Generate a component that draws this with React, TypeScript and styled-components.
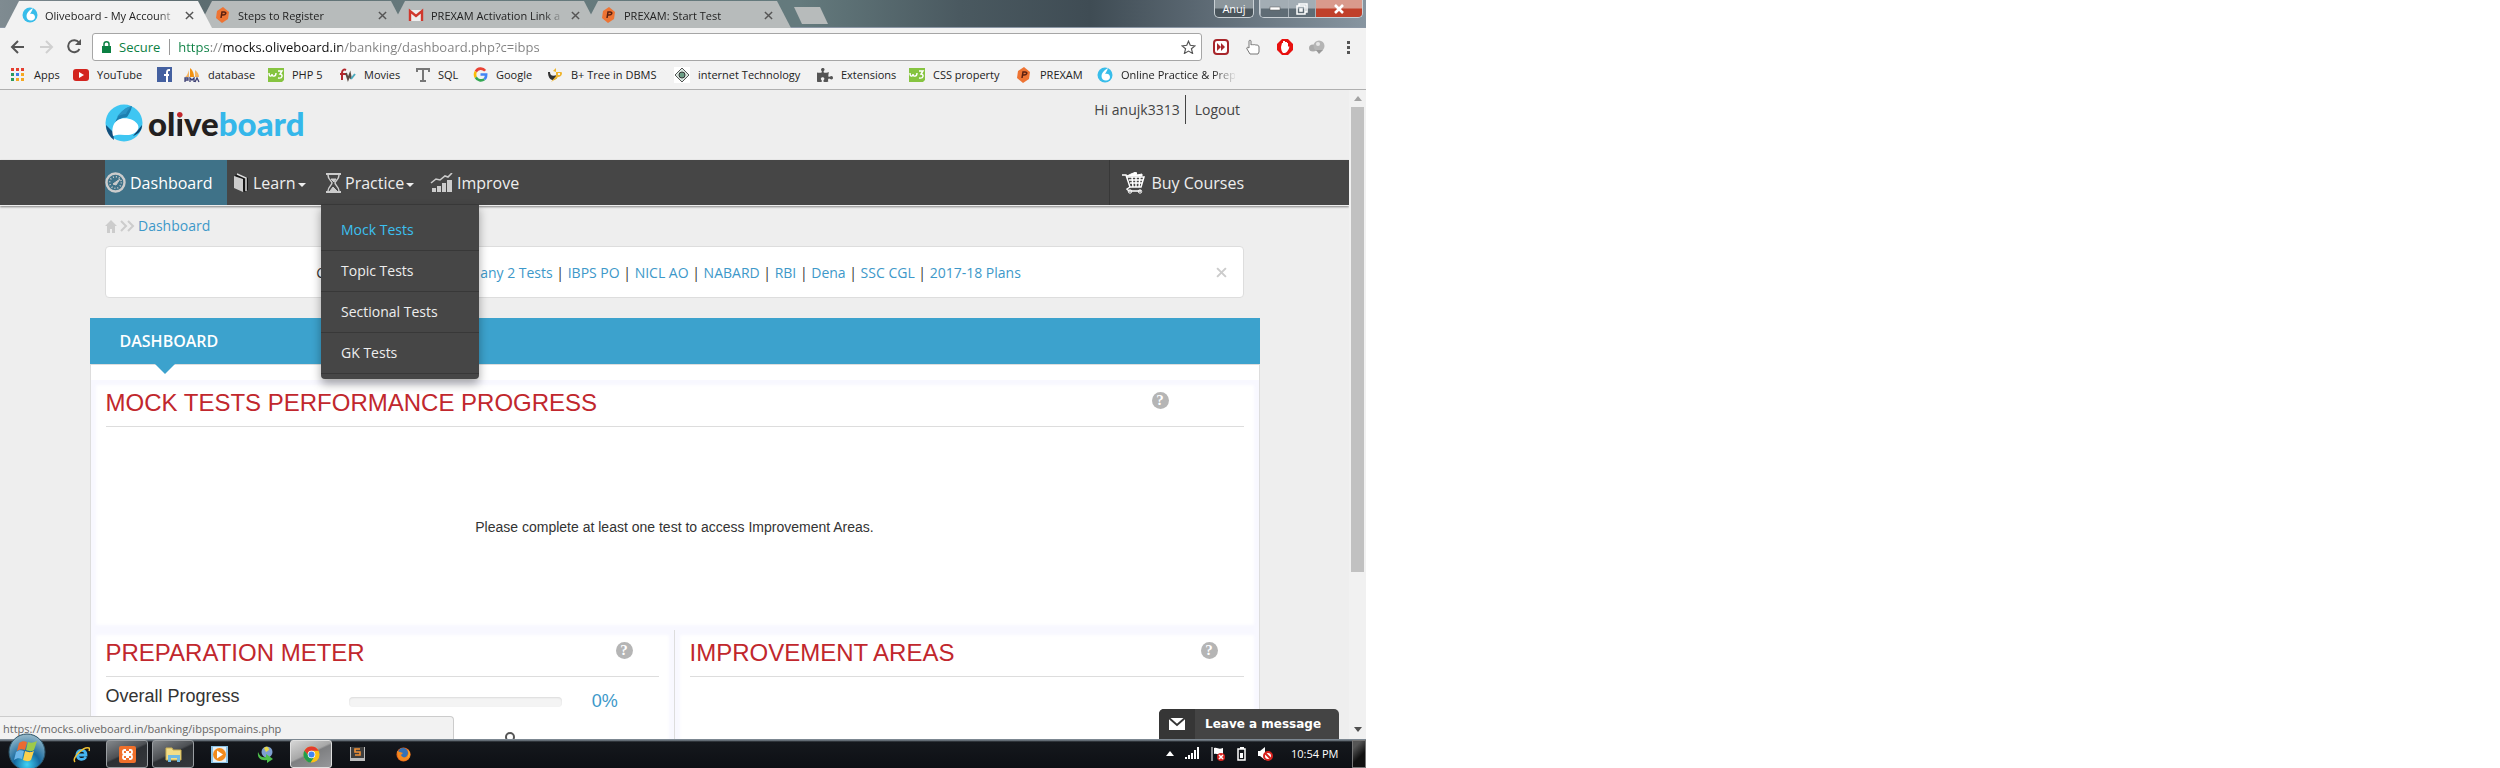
import React from 'react';
import styled, { createGlobalStyle, css } from 'styled-components';
import { FaPuzzlePiece } from 'react-icons/fa';

const GlobalStyle = createGlobalStyle`
  * { box-sizing: border-box; }
  body { margin: 0; background: #fff; font-family: 'Open Sans', 'Noto Sans', sans-serif; }
  button { font: inherit; color: inherit; background: none; border: 0; padding: 0; cursor: pointer; }
  a { text-decoration: none; color: inherit; }
  ul { list-style: none; margin: 0; padding: 0; }
  h1, h2, h3, p { margin: 0; font-weight: 400; }
  svg { display: block; flex: none; }
`;

const Desktop = styled.div`
  display: flex;
  flex-direction: column;
  width: 100%;
  max-width: 1366px;
  height: 100vh;
  overflow: hidden;
`;

/* ---------- browser frame ---------- */

const TitleBar = styled.div`
  display: flex;
  height: 28px;
  flex: none;
  padding-left: 5px;
  background: linear-gradient(90deg, #7f8b91 0, #5c6c70 190px, #66797c 420px, #647a7d 800px, #4a5960 960px, #3f4c54 1090px, #56636d 1180px, #8795a0 1366px);
  border-bottom: 1px solid #8b97a5;
`;

const Tab = styled.div<{ $active?: boolean }>`
  display: flex;
  align-items: center;
  width: 207px;
  height: 28px;
  flex: none;
  margin-right: -14px;
  padding: 2px 18px 0 17px;
  position: relative;
  z-index: ${(p) => (p.$active ? 2 : 1)};
  background: ${(p) => (p.$active ? '#f2f2f2' : '#b7bbbb')};
  clip-path: polygon(14px 1px, 193px 1px, 207px 100%, 0 100%);
  font-size: 11px;
  color: #222;
`;

const TabTitle = styled.button`
  flex: 1;
  margin-left: 7px;
  text-align: left;
  white-space: nowrap;
  overflow: hidden;
  mask-image: linear-gradient(90deg, #000 112px, transparent 134px);
`;

const TabClose = styled.button`
  width: 9px;
  height: 9px;
  margin: 0 0 0 6px;
`;

const NewTab = styled.button`
  width: 34px;
  height: 17px;
  margin: 7px 0 0 17px;
  background: #b7bbbb;
  clip-path: polygon(0 0, 26px 0, 100% 100%, 8px 100%);
`;

const WindowControls = styled.div`
  display: flex;
  gap: 5px;
  margin-left: auto;
  padding-right: 3px;
`;

const controlFrame = css`
  height: 18px;
  border: 1px solid #c9d0d5;
  border-top: 0;
  border-radius: 0 0 5px 5px;
  overflow: hidden;
`;

const UserBadge = styled.button`
  ${controlFrame}
  width: 40px;
  background: linear-gradient(#8c969c 45%, #4a555c 55%);
  color: #fff;
  font-size: 11px;
  line-height: 16px;
`;

const ControlGroup = styled.div`
  ${controlFrame}
  display: flex;
`;

const WinButton = styled.button<{ $w: number; $danger?: boolean }>`
  display: grid;
  place-items: center;
  width: ${(p) => p.$w}px;
  border-left: 1px solid #aab3ba;
  background: ${(p) => (p.$danger ? 'linear-gradient(#d99a8c 45%, #c0402a 55%)' : 'linear-gradient(#a3adb4 45%, #5f6c75 55%)')};
`;

const Toolbar = styled.div`
  display: flex;
  align-items: center;
  flex: none;
  height: 37px;
  padding: 0 15px 0 10px;
  background: #f2f2f2;
`;

const ToolButton = styled.button<{ $w: number; $gap: number }>`
  width: ${(p) => p.$w}px;
  margin-right: ${(p) => p.$gap}px;
  flex: none;
`;

const AddressBar = styled.form`
  display: flex;
  align-items: center;
  flex: 1;
  height: 28px;
  margin-right: 11px;
  padding: 0 5px 0 9px;
  background: #fff;
  border: 1px solid #a6a6a6;
  border-radius: 3px;
  font-size: 13px;
`;

const Secure = styled.label`
  margin-left: 8px;
  padding-right: 9px;
  line-height: 16px;
  border-right: 1px solid #999;
  color: #0b8043;
`;

const AddressInput = styled.input`
  flex: 1;
  min-width: 0;
  border: 0;
  outline: 0;
  padding: 0 0 0 8px;
  font: inherit;
  line-height: 20px;
  color: #333;
  background: linear-gradient(90deg, #0b8043 39px, #808080 39px 53px, #111 53px 172px, #808080 172px);
  background-clip: text;
  -webkit-background-clip: text;
  -webkit-text-fill-color: transparent;
`;

const BookmarkBar = styled.nav`
  display: flex;
  align-items: center;
  flex: none;
  height: 25px;
  padding: 0 0 5px 11px;
  background: #f2f2f2;
  border-bottom: 1px solid #b0b0b0;
  font-size: 11px;
  color: #222;
`;

const Bookmark = styled.a<{ $w: number; $fade?: boolean }>`
  display: flex;
  align-items: center;
  gap: 8px;
  flex: none;
  width: ${(p) => p.$w}px;
  line-height: 18px;
  white-space: nowrap;
  overflow: hidden;
  ${(p) => p.$fade && 'mask-image: linear-gradient(90deg, #000 115px, transparent 140px);'}
`;

/* ---------- page ---------- */

const Viewport = styled.div`
  display: flex;
  flex: 1;
  min-height: 0;
  position: relative;
  background: #eee;
`;

const Page = styled.div`
  flex: 1;
  min-width: 0;
  overflow: hidden;
`;

const ScrollTrack = styled.div`
  display: flex;
  flex-direction: column;
  align-items: center;
  width: 17px;
  flex: none;
  padding: 6px 0 7px;
  background: #f1f1f1;
`;

const ScrollThumb = styled.div`
  width: 13px;
  height: 465px;
  margin: 6px 0 auto;
  background: #c1c1c1;
`;

const Container = styled.div`
  max-width: 1169px;
  margin: 0 auto;
  padding: 0 15px;
`;

const PageHeader = styled(Container)`
  display: flex;
  justify-content: space-between;
  align-items: flex-start;
  height: 70px;
`;

const Logo = styled.a`
  display: flex;
  align-items: center;
  gap: 5px;
  padding-top: 14px;
  font-family: 'Lato', sans-serif;
  font-weight: 900;
  font-size: 33px;
  line-height: 38px;
  color: #231f20;
`;

const LogoBlue = styled.span`
  color: #35b7ea;
`;

const LogoDot = styled.span`
  background: linear-gradient(#c1272d 14px, #231f20 14px);
  background-clip: text;
  -webkit-background-clip: text;
  -webkit-text-fill-color: transparent;
`;

const Account = styled.div`
  display: flex;
  padding: 5px 4px 0 0;
  font-size: 14px;
  line-height: 29px;
  color: #444;
  a { padding-left: 9px; }
`;

const Greeting = styled.span`
  padding-right: 5px;
  border-right: 1px solid #444;
`;

const NavBar = styled.nav`
  background: #464646;
  border-bottom: 1px solid #eee;
  box-shadow: 0 1px 2px rgba(0, 0, 0, 0.45);
`;

const NavList = styled.ul`
  display: flex;
  max-width: 1169px;
  margin: 0 auto;
  padding: 0 15px;
`;

const NavItem = styled.li<{ $w?: number; $active?: boolean; $end?: boolean; $gap?: number; $indent?: number }>`
  position: relative;
  display: flex;
  align-items: center;
  gap: ${(p) => p.$gap ?? 4}px;
  width: ${(p) => (p.$w ? `${p.$w}px` : 'auto')};
  height: 45px;
  padding-left: ${(p) => p.$indent ?? 0}px;
  font-size: 16px;
  white-space: nowrap;
  color: ${(p) => (p.$active ? '#fff' : '#eee')};
  background: ${(p) => (p.$active ? '#3f7288' : 'none')};
  ${(p) => p.$end && 'margin-left: auto; border-left: 1px solid #383838;'}
`;

const Caret = styled.span`
  margin: 4px 0 0 -2px;
  border: 4px solid transparent;
  border-top-color: #eee;
  border-bottom: 0;
`;

const DropMenu = styled.ul`
  position: absolute;
  z-index: 5;
  top: 44px;
  left: -5px;
  width: 158px;
  height: 175px;
  background: #464646;
  border-radius: 0 0 4px 4px;
  border-top: 1px solid #383838;
  box-shadow: 0 5px 10px rgba(0, 0, 0, 0.35);
  font-size: 14px;
`;

const DropItem = styled.li<{ $hot?: boolean }>`
  padding: 4px 20px 0;
  height: 41px;
  line-height: 31px;
  border-bottom: 1px solid #383838;
  color: ${(p) => (p.$hot ? '#3cc0f0' : '#eee')};
  &:first-child { height: 46px; padding-top: 9px; }
`;

const Crumbs = styled.div`
  display: flex;
  align-items: center;
  gap: 3px;
  height: 40px;
  font-size: 14px;
  color: #3d98c9;
  a { padding-bottom: 2px; }
`;

const Notice = styled.div`
  display: flex;
  align-items: center;
  height: 52px;
  padding: 0 16px 0 15px;
  background: #fff;
  border: 1px solid #ddd;
  border-radius: 4px;
  font-size: 14px;
  color: #333;
`;

const NoticeLinks = styled.p`
  display: flex;
  flex: 1;
  justify-content: center;
  white-space: pre;
  a { color: #3d98c9; }
`;

const NoticeLead = styled.span`
  width: 164px;
`;

const Panel = styled.main`
  max-width: 1170px;
  margin: 20px auto 0;
  background: #fff;
  border: 1px solid #ddd;
  border-top: 0;
`;

const PanelTitle = styled.h1`
  position: relative;
  height: 46px;
  margin: 0 -1px 16px;
  padding-left: 30px;
  background: #3ca2cd;
  box-shadow: 0 1px #ddd;
  color: #fff;
  font-size: 16px;
  font-weight: 600;
  line-height: 46px;
  &::after {
    content: '';
    position: absolute;
    top: 46px;
    left: 65px;
    border: 10px solid transparent;
    border-top-color: #3ca2cd;
    border-bottom: 0;
  }
`;

const Row = styled.div`
  display: grid;
  grid-template-columns: 1fr 1fr;
`;

const Card = styled.section<{ $h: number; $divide?: boolean }>`
  min-height: ${(p) => p.$h}px;
  padding: 4px 15px 0;
  box-shadow: inset 0 0 3px 5px #f8f8ff;
  border-right: ${(p) => (p.$divide ? '1px solid #ddd' : '0')};
  font-family: 'Liberation Sans', Arial, sans-serif;
`;

const CardHead = styled.div<{ $pad: number }>`
  display: flex;
  justify-content: space-between;
  align-items: flex-start;
  height: 43px;
  padding-right: ${(p) => p.$pad}px;
  border-bottom: 1px solid #ddd;
`;

const CardTitle = styled.h2`
  font-size: 24px;
  line-height: 37px;
  color: #c1272d;
`;

const Help = styled.button`
  display: grid;
  place-items: center;
  width: 17px;
  height: 17px;
  margin-top: 8px;
  border-radius: 50%;
  background: #b5b5b5;
  color: #fff;
  font-family: 'Liberation Serif', serif;
  font-size: 15px;
  font-weight: 700;
  line-height: 17px;
`;

const EmptyText = styled.p`
  padding-top: 92px;
  text-align: center;
  font-size: 14px;
  line-height: 17px;
  color: #333;
`;

const ProgressRow = styled.div`
  display: flex;
  align-items: flex-start;
  padding-top: 7px;
  font-size: 18px;
  line-height: 24px;
  color: #333;
  label { width: 44%; }
`;

const Bar = styled.progress`
  appearance: none;
  display: block;
  width: 213px;
  height: 10px;
  margin: 13px 30px 0 0;
  border: 0;
  &::-webkit-progress-bar {
    background: #f4f4f4;
    border-radius: 4px;
    box-shadow: inset 0 1px 2px rgba(0, 0, 0, 0.1);
  }
`;

const Percent = styled.span`
  padding-top: 5px;
  color: #3d98c9;
`;

const Dial = styled.div`
  display: flex;
  padding: 18px 0 0 398px;
`;

const StatusBubble = styled.div`
  position: absolute;
  z-index: 4;
  left: 0;
  bottom: 0;
  width: 454px;
  height: 23px;
  padding-left: 3px;
  background: #f2f2f2;
  border: 1px solid #ccc;
  border-width: 1px 1px 0 0;
  border-radius: 0 4px 0 0;
  font-size: 11px;
  line-height: 23px;
  color: #666;
`;

const ChatButton = styled.button`
  position: absolute;
  z-index: 4;
  right: 27px;
  bottom: 0;
  display: flex;
  width: 180px;
  height: 30px;
  overflow: hidden;
  border-radius: 5px 5px 0 0;
  background: #444;
  color: #fff;
  font: 700 12px/30px 'DejaVu Sans', sans-serif;
`;

const ChatIcon = styled.span`
  display: grid;
  place-items: center;
  width: 36px;
  height: 30px;
  margin-right: 10px;
  background: #363636;
`;

/* ---------- taskbar ---------- */

const Taskbar = styled.footer`
  display: flex;
  position: relative;
  z-index: 6;
  flex: none;
  height: 29px;
  background: linear-gradient(#7c8791 1px, #15181d 3px, #0d0f14);
`;

const StartButton = styled.button`
  width: 38px;
  height: 36px;
  margin: -6px 14px 0 8px;
  flex: none;
`;

const TaskButton = styled.button<{ $state?: 'open' | 'active' }>`
  display: grid;
  place-items: center;
  width: 42px;
  height: 28px;
  margin: 1px 4px 0 0;
  flex: none;
  border: 1px solid transparent;
  border-radius: 3px;
  ${(p) => p.$state === 'open' && 'border-color: #9a9ea2; background: linear-gradient(155deg, #84888c 0%, #4d5054 45%, #2d3034 50%, #35383c 100%);'}
  ${(p) => p.$state === 'active' && 'border-color: #e0e0e0; background: linear-gradient(155deg, #d6d6d6 0%, #a8a8a8 45%, #7e7f81 50%, #96979a 100%);'}
`;

const Tray = styled.div`
  display: flex;
  align-items: center;
  gap: 11px;
  margin-left: auto;
  color: #fff;
  font-size: 11px;
`;

const Clock = styled.time`
  width: 50px;
  margin: 0 0 0 7px;
  white-space: nowrap;
`;

const ShowDesktop = styled.button`
  width: 14px;
  height: 28px;
  border: 1px solid #777;
  background: linear-gradient(135deg, #555 20%, #111 60%);
`;

/* ---------- icons ---------- */

const OliveMark = ({ s = 38 }: { s?: number }) => (
  <svg width={s} height={s} viewBox="0 0 38 38">
    <circle cx="19" cy="19" r="18.5" fill="#3fc6f2" />
    <path d="M10 19C13 10 19 4 27 2c-1 5-3 8-5 11-5 1-9 2-12 6z" fill="#1d7fb0" />
    <path d="M12 13c4-6 9-10 15-11-3 3-5 5-6 8-3 0-6 1-9 3z" fill="#2a93c4" />
    <path d="M1 21c0 7 4 12 8 15l-1-8z" fill="#124f7c" />
    <path d="M37 21c0 6-4 9-9 11l5-6z" fill="#0f4570" />
    <path d="M8 32C6 24 9 18 13 16c6-4 17-1 20 5 2 5-3 9-9 10-6 0-11-1-16 1z" fill="#fff" />
  </svg>
);

const OliveIcon = () => (
  <svg width="16" height="16" viewBox="0 0 16 16">
    <circle cx="8" cy="8" r="7.500" fill="#38bdea" />
    <path d="M11 1C8 3 5 5 4.500 9c0 3 2 4.500 4.500 4.500S13 12 13 10c0-3-3-4-5-3 1-2 2-3 3-6z" fill="#fff" />
  </svg>
);

const PrexamIcon = () => (
  <svg width="16" height="16" viewBox="0 0 16 16">
    <path d="M8 0l6 5-1 7-6 4-6-5 1-7z" fill="#ee7433" />
    <path d="M6 11l1-6h2c3 0 2 3-1 3H7" fill="none" stroke="#5c2110" strokeWidth="1.500" />
  </svg>
);

const GmailIcon = () => (
  <svg width="16" height="16" viewBox="0 0 16 16">
    <path d="M1 3h14v11H1z" fill="#eee" />
    <path d="M2 14V4l6 5 6-5v10" fill="none" stroke="#d0382d" strokeWidth="2.4" />
  </svg>
);

const CloseIcon = ({ s = 9, c = '#555', w = 1.6 }: { s?: number; c?: string; w?: number }) => (
  <svg width={s} height={s} viewBox="0 0 10 10">
    <path d="M1 1l8 8M9 1l-8 8" stroke={c} strokeWidth={w} />
  </svg>
);

const W3Icon = () => (
  <svg width="16" height="16" viewBox="0 0 16 16">
    <path d="M0 1h16v12l-2 2H0z" fill="#86c440" />
    <path d="M1 6c0 4 3 4 3 1 0 3 4 3 4-1" fill="none" stroke="#fff" strokeWidth="1.400" />
    <path d="M10 4h4l-2 3c3 0 3 5-2 4" fill="none" stroke="#fff" strokeWidth="1.400" />
  </svg>
);

const AppsIcon = () => (
  <svg width="15" height="15" viewBox="0 0 15 15">
    {['#e53e30', '#e53e30', '#e53e30', '#2b9a5d', '#3f7de8', '#f6a821', '#2b9a5d', '#f6a821', '#f6a821'].map((c, i) => (
      <rect key={i} x={(i % 3) * 5} y={1 + Math.floor(i / 3) * 5} width="3" height="3" fill={c} />
    ))}
  </svg>
);

const YouTubeIcon = () => (
  <svg width="16" height="16" viewBox="0 0 16 16">
    <rect y="2" width="16" height="12" rx="3" fill="#d3251f" />
    <path d="M6 5l5 3-5 3z" fill="#fff" />
  </svg>
);

const FacebookIcon = () => (
  <svg width="15" height="15" viewBox="0 0 15 15">
    <path d="M0 0h15v15H0z" fill="#4460a0" />
    <path d="M13 3h-1c-2 0-2 1-2 3v9M7 8h5" fill="none" stroke="#fff" strokeWidth="2" />
  </svg>
);

const PmaIcon = () => (
  <svg width="16" height="16" viewBox="0 0 16 16">
    <path d="M6 10V1c3 2 4 6 4 9z" fill="#f29111" />
    <path d="M1 10c2-1 3-4 4-7v7zM11 3c3 2 4 5 4 7h-4z" fill="#f4b25e" />
    <path d="M1 15v-4h3v2H1M6 15v-4l2 2 2-2v4M11 15l2-4 2 4" fill="none" stroke="#3c3f73" strokeWidth="1.3" />
  </svg>
);

const MoviesIcon = () => (
  <svg width="16" height="16" viewBox="0 0 16 16" fill="none" strokeWidth="2">
    <path d="M2 13V6c0-3 2-4 4-3M0 7h6" stroke="#b3282d" />
    <path d="M6 6l2 6 2-5 1 5" stroke="#5a4a42" />
    <path d="M11 12l4-5" stroke="#49a9bd" />
  </svg>
);

const TIcon = () => (
  <svg width="14" height="16" viewBox="0 0 14 16">
    <path d="M1 5V2h12v3M7 2v12M4 14h6" fill="none" stroke="#777" strokeWidth="2" />
  </svg>
);

const GoogleIcon = () => (
  <svg width="15" height="15" viewBox="0 0 16 16" fill="none" strokeWidth="2.8">
    <path d="M13 4a6 6 0 0 0-10 1" stroke="#ea4335" />
    <path d="M3 5a6 6 0 0 0 0 6" stroke="#fbbc05" />
    <path d="M3 11a6 6 0 0 0 9 2" stroke="#34a853" />
    <path d="M12 13c2-1 2-3 2-5H8" stroke="#4285f4" />
  </svg>
);

const CupIcon = () => (
  <svg width="16" height="16" viewBox="0 0 16 16">
    <path d="M1 5h2c0 3 2 5 7 3v3c-4 4-9 2-9-6z" fill="#333" />
    <path d="M6 4l3-3v4z" fill="#efb52f" />
    <path d="M9 5h5c2 0 1 5-3 5l-2 2-5 3 5-6z" fill="#efb52f" />
    <path d="M11 6h2v2h-2z" fill="#f2f2f2" />
  </svg>
);

const DiamondIcon = () => (
  <svg width="16" height="16" viewBox="0 0 16 16">
    <path d="M0 0h16v16H0z" fill="#fff" />
    <path d="M8 1l7 7-7 7-7-7z" fill="#d9e6df" stroke="#555" />
    <circle cx="8" cy="8" r="3" fill="#6c9f86" stroke="#333" />
  </svg>
);

const SkipIcon = () => (
  <svg width="16" height="16" viewBox="0 0 16 16">
    <rect x="1" y="1" width="14" height="14" rx="3" fill="#fff" stroke="#a8262b" strokeWidth="2" />
    <path d="M4 4l4 4-4 4zM8 4l4 4-4 4z" fill="#a8262b" />
  </svg>
);

const HandIcon = () => (
  <svg width="16" height="16" viewBox="0 0 16 16">
    <path d="M5 15l-3-5c-1-2 1-2 2-1V2c0-1 2-1 2 0v4c1-1 2 0 2 0 1-1 2 0 3 0 1 0 3 0 3 2v5l-1 2z" fill="#fff" stroke="#777" />
  </svg>
);

const BlockIcon = () => (
  <svg width="16" height="16" viewBox="0 0 16 16">
    <path d="M5 0h6l5 5v6l-5 5H5l-5-5V5z" fill="#e8110f" />
    <path d="M4 8l1-4h1V2h2v1h2v1h1v4l1-1c1 1-1 6-4 7H6c-1-1-2-3-2-6z" fill="#fff" />
  </svg>
);

const SphereIcon = () => (
  <svg width="16" height="16" viewBox="0 0 16 16">
    <ellipse cx="4" cy="9" rx="4" ry="3.5" fill="#aaa" />
    <circle cx="10" cy="7" r="5.5" fill="#b5b5b5" />
    <path d="M7 11h7l-4 4z" fill="#999" />
    <circle cx="9" cy="5" r="2" fill="#e6e6e6" />
  </svg>
);

const WindowsOrb = () => (
  <svg width="38" height="38" viewBox="0 0 38 38">
    <defs>
      <radialGradient id="orb" cx=".5" cy=".85" r=".8">
        <stop offset="0" stopColor="#3fd3f6" />
        <stop offset=".45" stopColor="#16699f" />
        <stop offset="1" stopColor="#8fb4c6" />
      </radialGradient>
    </defs>
    <circle cx="19" cy="19" r="18" fill="url(#orb)" stroke="#2d5468" />
    <path d="M11 10c3-2 5-2 8-1l-2 8c-3-1-5-1-8 1z" fill="#ec6a31" />
    <path d="M20 9c3 1 5 1 9-1l-3 9c-3 2-5 1-8 0z" fill="#9dc94a" />
    <path d="M8 19c3-2 5-2 8-1l-2 8c-3-1-5-1-8 1z" fill="#6cb6e8" />
    <path d="M17 18c3 1 5 2 9 0l-3 9c-3 2-5 1-8 0z" fill="#fbd04b" />
  </svg>
);

const IeIcon = () => (
  <svg width="17" height="17" viewBox="0 0 17 17" fill="none">
    <path d="M4 9h9c0-6-8-6-9-1 0 6 6 7 9 3" stroke="#45b5f0" strokeWidth="2.8" />
    <path d="M2 16c-4-4 9-16 14-14 1 1 0 3 0 3" stroke="#f1c232" strokeWidth="1.5" />
  </svg>
);

const XamppIcon = () => (
  <svg width="17" height="17" viewBox="0 0 17 17">
    <rect width="17" height="17" rx="2" fill="#f0702b" />
    <rect x="4" y="4" width="4" height="4" rx="1.500" fill="none" stroke="#fff" strokeWidth="1.800" />
    <rect x="9" y="4" width="4" height="4" rx="1.500" fill="none" stroke="#fff" strokeWidth="1.800" />
    <rect x="4" y="9" width="4" height="4" rx="1.500" fill="none" stroke="#fff" strokeWidth="1.800" />
    <rect x="9" y="9" width="4" height="4" rx="1.500" fill="none" stroke="#fff" strokeWidth="1.800" />
    <path d="M7 5h3v7H7z" fill="#fff" />
    <path d="M7 3h3v2H7zM7 12h3v2H7z" fill="#f0702b" />
  </svg>
);

const FolderIcon = () => (
  <svg width="17" height="17" viewBox="0 0 17 17">
    <path d="M1 2h6l1 2h8v10H1z" fill="#f2dd88" stroke="#cdb254" />
    <path d="M3 9h12v7h-3v-4H6v4H3z" fill="#6fb9e2" />
  </svg>
);

const PlayerIcon = () => (
  <svg width="17" height="17" viewBox="0 0 17 17">
    <path d="M0 0h17v17H0z" fill="#8cc3e6" />
    <path d="M2 1h13v15H2z" fill="#e7eff5" />
    <circle cx="8.500" cy="8.500" r="6.500" fill="#f18a1b" />
    <path d="M6 4.500l6 4-6 4z" fill="#fff" />
  </svg>
);

const IdmIcon = () => (
  <svg width="17" height="17" viewBox="0 0 17 17">
    <circle cx="10" cy="6" r="5.500" fill="#7f9fd0" />
    <path d="M7 2c3-3 5 0 5 2l-3 2z" fill="#e9d94a" />
    <path d="M1 6c2 5 5 6 8 5V8l7 5-6 4v-3C4 15 0 12 1 6z" fill="#4fc04c" />
  </svg>
);

const ChromeIcon = () => (
  <svg width="17" height="17" viewBox="0 0 18 18">
    <circle cx="9" cy="9" r="8.500" fill="#fbc116" />
    <path d="M1.500 5A8.500 8.500 0 0 1 16.500 5H9a4 4 0 0 0-4 4z" fill="#e33b2e" />
    <path d="M1.500 5A8.500 8.500 0 0 0 8 17.500l4-6-3 1.500-4-4z" fill="#229b4d" />
    <circle cx="9" cy="9" r="4" fill="#fff" />
    <circle cx="9" cy="9" r="3.200" fill="#4284f3" />
  </svg>
);

const SublimeIcon = () => (
  <svg width="15" height="14" viewBox="0 0 15 14">
    <path d="M0 0h15v14H0z" fill="#bbb" />
    <path d="M1 0h13v11H1z" fill="#3d3d3d" />
    <path d="M10 2H5v3h5v3H5" fill="none" stroke="#f29136" strokeWidth="1.600" />
  </svg>
);

const FirefoxIcon = () => (
  <svg width="15" height="15" viewBox="0 0 15 15">
    <circle cx="7.500" cy="7.500" r="7" fill="#e8641b" />
    <circle cx="7" cy="6" r="5" fill="#3472b5" />
    <path d="M1 4l3 1 3 1-2 2c1 3 5 3 6 1 2-2 1-5 0-7 3 2 4 5 3 8-3 5-10 5-12 0z" fill="#f28a1f" />
    <path d="M11 2c3 3 2 7 0 9 3-1 4-6 0-9z" fill="#fbc53a" />
  </svg>
);

const ReloadIcon = () => (
  <svg width="15" height="15" viewBox="0 0 15 15">
    <path d="M12.500 10A6 6 0 1 1 12 3.500" fill="none" stroke="#555" strokeWidth="2" />
    <path d="M14 0v6H8z" fill="#555" />
  </svg>
);

const ArrowIcon = ({ c, flip }: { c: string; flip?: boolean }) => (
  <svg width="15" height="14" viewBox="0 0 15 14">
    <path d={flip ? 'M1 7h12M7 1l6 6-6 6' : 'M14 7H2M8 1L2 7l6 6'} fill="none" stroke={c} strokeWidth="2" />
  </svg>
);

const GaugeIcon = () => (
  <svg width="21" height="21" viewBox="0 0 21 21" fill="none" stroke="#ccc">
    <circle cx="10.500" cy="10.500" r="9" strokeWidth="2.400" />
    <circle cx="10.500" cy="10.500" r="5.800" strokeWidth="1.600" strokeDasharray="1 2" />
    <path d="M8 12l7-5-4 6z" fill="#ccc" />
  </svg>
);

const BookIcon = () => (
  <svg width="15" height="20" viewBox="0 0 15 20">
    <path d="M1 2l4-1 9 4v12l-4 2z" fill="#151515" />
    <path d="M0 3l9 3v13l-9-4z" fill="#ccc" />
    <path d="M3 1l9 4v13" fill="none" stroke="#ddd" strokeWidth="1.500" />
  </svg>
);

const HourglassIcon = () => (
  <svg width="15" height="20" viewBox="0 0 15 20" fill="none" stroke="#ccc">
    <path d="M0 1h15M0 19h15" strokeWidth="2" />
    <path d="M2 2c0 5 4 6 4 8s-4 4-4 8M13 2c0 5-4 6-4 8s4 4 4 8" strokeWidth="1.500" />
    <path d="M5 6h5l-2 3zM4 18l3-4 4 4z" fill="#ccc" />
  </svg>
);

const ChartIcon = () => (
  <svg width="23" height="20" viewBox="0 0 23 20" fill="#ccc">
    <path d="M2 15h4v4H2zM7 13h4v6H7zM12 10h4v9h-4zM17 7h5v12h-5z" />
    <path d="M1 10l5-4 4 1 5-4 3 1 4-4" fill="none" stroke="#ccc" strokeWidth="1.600" />
  </svg>
);

const CartIcon = () => (
  <svg width="23" height="22" viewBox="0 0 23 22" fill="none" stroke="#fff">
    <path d="M0 3h4l4 12h11l3-10H5M7 8h14M8 11h12M10 5l1 10M14 5v10M18 5l-1 10" strokeWidth="1.500" />
    <path d="M5 4l4-2 5-2 1 3 5-1v2z" fill="#fff" />
    <path d="M8 15l-3 2 2 2h12" strokeWidth="1.500" />
    <circle cx="8" cy="19.500" r="1.700" />
    <circle cx="18" cy="19.500" r="1.700" />
  </svg>
);

const bookmarks: { label: string; w: number; icon: React.ReactNode; fade?: boolean }[] = [
  { label: 'Apps', w: 62, icon: <AppsIcon /> },
  { label: 'YouTube', w: 84, icon: <YouTubeIcon /> },
  { label: '', w: 27, icon: <FacebookIcon /> },
  { label: 'database', w: 84, icon: <PmaIcon /> },
  { label: 'PHP 5', w: 72, icon: <W3Icon /> },
  { label: 'Movies', w: 76, icon: <MoviesIcon /> },
  { label: 'SQL', w: 57, icon: <TIcon /> },
  { label: 'Google', w: 74, icon: <GoogleIcon /> },
  { label: 'B+ Tree in DBMS', w: 127, icon: <CupIcon /> },
  { label: 'internet Technology', w: 143, icon: <DiamondIcon /> },
  { label: 'Extensions', w: 92, icon: <FaPuzzlePiece size={16} color="#555" /> },
  { label: 'CSS property', w: 107, icon: <W3Icon /> },
  { label: 'PREXAM', w: 81, icon: <PrexamIcon /> },
  { label: 'Online Practice & Prep', w: 138, icon: <OliveIcon />, fade: true },
];

const tabs = [
  { title: 'Oliveboard - My Account', icon: <OliveIcon />, active: true },
  { title: 'Steps to Register', icon: <PrexamIcon /> },
  { title: 'PREXAM Activation Link a', icon: <GmailIcon /> },
  { title: 'PREXAM: Start Test', icon: <PrexamIcon /> },
];

const noticeLinks = ['any 2 Tests', 'IBPS PO', 'NICL AO', 'NABARD', 'RBI', 'Dena', 'SSC CGL', '2017-18 Plans'];

export default function App() {
  return (
    <Desktop>
      <GlobalStyle />
      <TitleBar>
        {tabs.map((t) => (
          <Tab key={t.title} $active={t.active}>
            {t.icon}
            <TabTitle>{t.title}</TabTitle>
            <TabClose aria-label="Close tab"><CloseIcon /></TabClose>
          </Tab>
        ))}
        <NewTab aria-label="New tab" />
        <WindowControls>
          <UserBadge>Anuj</UserBadge>
          <ControlGroup>
            <WinButton $w={28} aria-label="Minimize">
              <svg width="12" height="5"><rect x="1" y="1" width="10" height="3" fill="#fff" stroke="#555" strokeWidth=".5" /></svg>
            </WinButton>
            <WinButton $w={27} aria-label="Restore">
              <svg width="12" height="12" fill="none" stroke="#fff" strokeWidth="1.500"><path d="M3 3V1h8v8H9M1 3h8v8H1zM4 6h2v2H4z" /></svg>
            </WinButton>
            <WinButton $w={47} $danger aria-label="Close"><CloseIcon s={10} c="#fff" w={2.6} /></WinButton>
          </ControlGroup>
        </WindowControls>
      </TitleBar>

      <Toolbar>
        <ToolButton $w={15} $gap={14} aria-label="Back"><ArrowIcon c="#555" /></ToolButton>
        <ToolButton $w={15} $gap={13} aria-label="Forward"><ArrowIcon c="#d0d0d0" flip /></ToolButton>
        <ToolButton $w={15} $gap={10} aria-label="Reload"><ReloadIcon /></ToolButton>
        <AddressBar>
          <svg width="9" height="12" viewBox="0 0 9 12">
            <path d="M0 5h9v7H0z" fill="#0b8043" />
            <path d="M2 5V3c0-3 5-3 5 0v2" fill="none" stroke="#0b8043" strokeWidth="1.500" />
          </svg>
          <Secure htmlFor="address">Secure</Secure>
          <AddressInput id="address" defaultValue="https://mocks.oliveboard.in/banking/dashboard.php?c=ibps" />
          <svg width="15" height="14" viewBox="0 0 24 24">
            <path d="M12 2l3 7 8 1-6 5 2 8-7-4-7 4 2-8-6-5 8-1z" fill="none" stroke="#555" strokeWidth="2" />
          </svg>
        </AddressBar>
        <ToolButton $w={16} $gap={16} aria-label="Skip"><SkipIcon /></ToolButton>
        <ToolButton $w={16} $gap={16} aria-label="Pointer"><HandIcon /></ToolButton>
        <ToolButton $w={16} $gap={16} aria-label="Ad blocker"><BlockIcon /></ToolButton>
        <ToolButton $w={16} $gap={22} aria-label="Globe"><SphereIcon /></ToolButton>
        <ToolButton $w={4} $gap={0} aria-label="Menu">
          <svg width="4" height="14" fill="#555"><path d="M0 1h3v3H0zM0 6h3v3H0zM0 11h3v3H0z" /></svg>
        </ToolButton>
      </Toolbar>

      <BookmarkBar>
        {bookmarks.map((b) => (
          <Bookmark key={b.label} href="#" $w={b.w} $fade={b.fade} aria-label={b.label || 'Facebook'}>
            {b.icon}
            {b.label}
          </Bookmark>
        ))}
      </BookmarkBar>

      <Viewport>
        <Page>
          <PageHeader>
            <Logo href="#">
              <OliveMark />
              <span>ol<LogoDot>i</LogoDot>ve<LogoBlue>board</LogoBlue></span>
            </Logo>
            <Account>
              <Greeting>Hi anujk3313</Greeting>
              <a href="#">Logout</a>
            </Account>
          </PageHeader>

          <NavBar>
            <NavList>
              <NavItem $w={122} $active><GaugeIcon /><a href="#">Dashboard</a></NavItem>
              <NavItem $w={99} $indent={7}><BookIcon /><a href="#">Learn</a><Caret /></NavItem>
              <NavItem $w={104}>
                <HourglassIcon /><a href="#">Practice</a><Caret />
                <DropMenu>
                  <DropItem $hot><a href="#">Mock Tests</a></DropItem>
                  <DropItem><a href="#">Topic Tests</a></DropItem>
                  <DropItem><a href="#">Sectional Tests</a></DropItem>
                  <DropItem><a href="#">GK Tests</a></DropItem>
                </DropMenu>
              </NavItem>
              <NavItem><ChartIcon /><a href="#">Improve</a></NavItem>
              <NavItem $end $indent={12} $gap={6}><CartIcon /><a href="#">Buy Courses</a></NavItem>
            </NavList>
          </NavBar>

          <Container>
            <Crumbs>
              <svg width="12" height="13" viewBox="0 0 12 13"><path d="M6 0l6 6h-2v7H7V9H5v4H2V6H0z" fill="#ccc" /></svg>
              <svg width="15" height="12" viewBox="0 0 15 12"><path d="M1 1l5 5-5 5M8 1l5 5-5 5" fill="none" stroke="#ccc" strokeWidth="2" /></svg>
              <a href="#">Dashboard</a>
            </Crumbs>
            <Notice>
              <NoticeLinks>
                <NoticeLead>C</NoticeLead>
                {noticeLinks.map((l, i) => (
                  <React.Fragment key={l}>
                    {i > 0 && ' | '}
                    <a href="#">{l}</a>
                  </React.Fragment>
                ))}
              </NoticeLinks>
              <button aria-label="Dismiss"><CloseIcon s={11} c="#ccc" w={1.8} /></button>
            </Notice>
          </Container>

          <Panel>
            <PanelTitle>DASHBOARD</PanelTitle>
            <Card $h={250}>
              <CardHead $pad={75}>
                <CardTitle>MOCK TESTS PERFORMANCE PROGRESS</CardTitle>
                <Help aria-label="Help">?</Help>
              </CardHead>
              <EmptyText>Please complete at least one test to access Improvement Areas.</EmptyText>
            </Card>
            <Row>
              <Card $h={250} $divide>
                <CardHead $pad={26}>
                  <CardTitle>PREPARATION METER</CardTitle>
                  <Help aria-label="Help">?</Help>
                </CardHead>
                <ProgressRow>
                  <label htmlFor="overall">Overall Progress</label>
                  <Bar id="overall" value={0} max={100} />
                  <Percent>0%</Percent>
                </ProgressRow>
                <Dial>
                  <svg width="12" height="12" viewBox="0 0 12 12"><circle cx="6" cy="6" r="4" fill="#fff" stroke="#555" strokeWidth="2" /></svg>
                </Dial>
              </Card>
              <Card $h={250}>
                <CardHead $pad={26}>
                  <CardTitle>IMPROVEMENT AREAS</CardTitle>
                  <Help aria-label="Help">?</Help>
                </CardHead>
              </Card>
            </Row>
          </Panel>
        </Page>
        <ScrollTrack>
          <svg width="8" height="5"><path d="M0 5l4-5 4 5z" fill="#a3a3a3" /></svg>
          <ScrollThumb />
          <svg width="8" height="5"><path d="M0 0h8L4 5z" fill="#505050" /></svg>
        </ScrollTrack>
        <StatusBubble>https://mocks.oliveboard.in/banking/ibpspomains.php</StatusBubble>
        <ChatButton>
          <ChatIcon>
            <svg width="16" height="12" viewBox="0 0 16 12">
              <path d="M0 0h16v12H0z" fill="#fff" />
              <path d="M0 0l8 7 8-7" fill="none" stroke="#363636" strokeWidth="2" />
            </svg>
          </ChatIcon>
          Leave a message
        </ChatButton>
      </Viewport>

      <Taskbar>
        <StartButton aria-label="Start"><WindowsOrb /></StartButton>
        <TaskButton aria-label="Internet Explorer"><IeIcon /></TaskButton>
        <TaskButton aria-label="XAMPP" $state="open"><XamppIcon /></TaskButton>
        <TaskButton aria-label="Explorer" $state="open"><FolderIcon /></TaskButton>
        <TaskButton aria-label="Media player"><PlayerIcon /></TaskButton>
        <TaskButton aria-label="Download manager"><IdmIcon /></TaskButton>
        <TaskButton aria-label="Chrome" $state="active"><ChromeIcon /></TaskButton>
        <TaskButton aria-label="Sublime Text"><SublimeIcon /></TaskButton>
        <TaskButton aria-label="Firefox"><FirefoxIcon /></TaskButton>
        <Tray>
          <svg width="8" height="5"><path d="M0 5l4-5 4 5z" fill="#fff" /></svg>
          <svg width="15" height="13" fill="#fff"><path d="M0 10h2v2H0zM3 8h2v4H3zM6 6h2v6H6zM9 3h2v9H9zM12 0h2v12h-2z" /></svg>
          <svg width="15" height="14">
            <path d="M1 0v14" stroke="#fff" /><path d="M3 1c4-1 4 2 9 0v6c-4 2-5-1-9 0z" fill="#fff" />
            <circle cx="10" cy="10" r="4" fill="#d8231f" /><path d="M8 8l4 4M12 8l-4 4" stroke="#fff" strokeWidth="1.500" />
          </svg>
          <svg width="10" height="14"><path d="M3 0h4v2H3z" fill="#fff" /><path d="M1 2h7v11H1z" fill="none" stroke="#fff" strokeWidth="1.500" /><path d="M3 6h3v5H3z" fill="#fff" /></svg>
          <svg width="15" height="14">
            <path d="M0 4h2l5-4v13l-5-4H0z" fill="#fff" />
            <circle cx="10" cy="9" r="4" fill="#fff" stroke="#d8231f" strokeWidth="2" /><path d="M7 6l6 6" stroke="#d8231f" strokeWidth="2" />
          </svg>
          <Clock>10:54 PM</Clock>
          <ShowDesktop aria-label="Show desktop" />
        </Tray>
      </Taskbar>
    </Desktop>
  );
}
